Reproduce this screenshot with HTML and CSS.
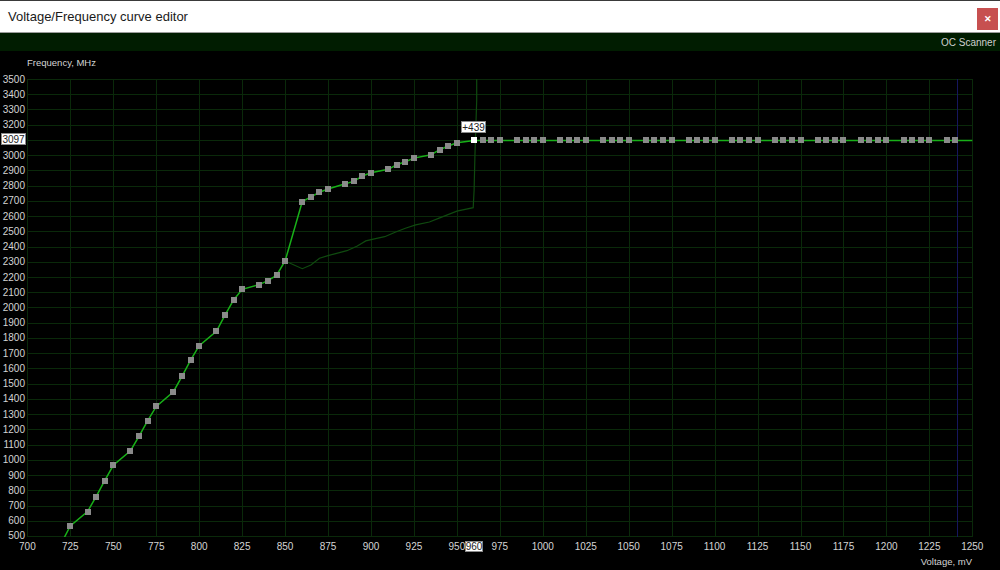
FILE: index.html
```html
<!DOCTYPE html>
<html lang="en">
<head>
  <meta charset="UTF-8">
  <title>Voltage/Frequency curve editor</title>
  <link rel="stylesheet" href="styles.css">
</head>
<body>
  <div class="window">
    <div class="titlebar">
      <span class="title">Voltage/Frequency curve editor</span>
      <span class="close">&#x2715;</span>
    </div>
    <div class="toolbar">
      <span class="scanner">OC Scanner</span>
    </div>
    <div class="chart">
      <svg id="curve" width="1000" height="519" viewBox="0 51 1000 519">
        <defs>
          <clipPath id="plot">
            <rect x="27" y="79" width="946" height="458"></rect>
          </clipPath>
        </defs>
        <g id="grid"></g>
        <g id="labels" class="axis"></g>
        <g id="lines" clip-path="url(#plot)"></g>
        <g id="dots"></g>
        <g id="marks" class="mark"></g>
      </svg>
    </div>
  </div>

  <script>
    const NS = "http://www.w3.org/2000/svg";
    const px = v => 27.4 + (v - 700) * 1.718;
    const py = f => 79 + (3500 - f) * 0.152333;

    // edited curve points: [mV, MHz]
    const curve = [
      [720, 458], [725, 566], [735, 660], [740, 758], [745, 863], [750, 964],
      [760, 1060], [765, 1156], [770, 1257], [775, 1351], [785, 1447],
      [790, 1548], [795, 1655], [800, 1749], [810, 1844], [815, 1950],
      [820, 2049], [825, 2119], [835, 2150], [840, 2176], [845, 2211],
      [850, 2305], [860, 2695], [865, 2727], [870, 2756], [875, 2778],
      [885, 2813], [890, 2828], [895, 2863], [900, 2885], [910, 2907],
      [915, 2937], [920, 2957], [925, 2981], [935, 3003], [940, 3036],
      [945, 3060], [950, 3082], [960, 3097]
    ];
    for (let v = 965; v <= 1240; v += 5) {
      if ((v - 700) % 25 !== 5) curve.push([v, 3097]);
    }

    // stock curve (dark)
    const stock = [
      [850, 2305], [860, 2255], [865, 2279], [870, 2323], [875, 2340],
      [880, 2356], [886, 2373], [892, 2404], [897, 2437], [902, 2450],
      [908, 2465], [914, 2494], [920, 2520], [926, 2542], [934, 2561],
      [940, 2588], [950, 2633], [959.5, 2655], [960, 2770], [960.5, 2990],
      [961.5, 3360], [961.5, 3600]
    ];

    function el(parent, name, attrs, text) {
      const node = document.createElementNS(NS, name);
      for (const k in attrs) node.setAttribute(k, attrs[k]);
      if (text !== undefined) node.textContent = text;
      document.getElementById(parent).appendChild(node);
      return node;
    }

    // grid
    for (let v = 700; v <= 1250; v += 25) {
      const x = Math.round(px(v)) + 0.5;
      el("grid", "line", { x1: x, y1: 79, x2: x, y2: 537, class: "gridline" });
      el("labels", "text", { x: px(v), y: 550, "text-anchor": "middle" }, v === 960 ? "" : v);
    }
    for (let f = 500; f <= 3500; f += 100) {
      const y = Math.round(py(f)) + 0.5;
      el("grid", "line", { x1: 27, y1: y, x2: 973, y2: y, class: "gridline" });
      if (f !== 3100) el("labels", "text", { x: 25, y: py(f) + 3.5, "text-anchor": "end" }, f);
    }
    el("grid", "line", { x1: 957.5, y1: 79, x2: 957.5, y2: 537, class: "limit" });

    el("labels", "text", { x: 27, y: 66, class: "caption" }, "Frequency, MHz");
    el("labels", "text", { x: 972, y: 565, "text-anchor": "end", class: "caption" }, "Voltage, mV");

    // curves
    const pts = list => list.map(p => px(p[0]).toFixed(1) + "," + py(p[1]).toFixed(1)).join(" ");
    el("lines", "polyline", { points: pts(stock), class: "stock" });
    el("lines", "polyline", { points: pts(curve.concat([[1250, 3097]])), class: "edited" });

    curve.forEach(p => {
      if (p[0] < 725) return;
      const x = Math.round(px(p[0])), y = Math.round(py(p[1]));
      el("dots", "rect", { x: x - 3, y: y - 3, width: 6, height: 6, class: p[0] === 960 ? "dot active" : "dot" });
    });

    // selected point readouts
    el("marks", "rect", { x: 461.5, y: 121.5, width: 24, height: 11 });
    el("marks", "text", { x: 473.5, y: 130.5, "text-anchor": "middle" }, "+439");
    el("marks", "rect", { x: 1.5, y: 133.5, width: 24, height: 11 });
    el("marks", "text", { x: 13.5, y: 143, "text-anchor": "middle" }, "3097");
    el("marks", "rect", { x: 465.5, y: 541.5, width: 17, height: 10 });
    el("marks", "text", { x: 474, y: 550, "text-anchor": "middle" }, "960");
  </script>
</body>
</html>
```

FILE: styles.css
```css
body {
  margin: 0;
  background: #000;
  font-family: "Liberation Sans", Arial, sans-serif;
}
.window {
  width: 1000px;
  height: 570px;
  display: flex;
  flex-direction: column;
  overflow: hidden;
}
.titlebar {
  height: 31px;
  flex: none;
  display: flex;
  align-items: center;
  justify-content: space-between;
  background: #fff;
  border-top: 1px solid #3a3a3a;
  border-bottom: 1px solid #9c9c9c;
}
.title {
  margin-left: 8px;
  font-size: 13px;
  color: #1a1a1a;
}
.close {
  width: 21px;
  height: 22px;
  margin-right: 2px;
  margin-top: 4px;
  display: flex;
  align-items: center;
  justify-content: center;
  background: #c75050;
  color: #fff;
  font-size: 9px;
  font-weight: bold;
}
.toolbar {
  height: 18px;
  flex: none;
  display: flex;
  align-items: center;
  justify-content: flex-end;
  background: #011d01;
}
.scanner {
  margin-right: 4px;
  font-size: 10px;
  color: #cfcfcf;
}
.chart {
  flex: 1;
  background: #000;
}
.chart svg {
  display: block;
}
.gridline {
  stroke: #0a290a;
  stroke-width: 1;
}
.limit {
  stroke: #16165e;
  stroke-width: 1;
}
.axis text {
  font-family: "Liberation Sans", Arial, sans-serif;
  font-size: 10px;
  fill: #d4d4d4;
}
.axis .caption {
  font-size: 9.5px;
}
.stock {
  fill: none;
  stroke: #0f4a0f;
  stroke-width: 1.2;
}
.edited {
  fill: none;
  stroke: #18b018;
  stroke-width: 1.5;
}
.dot {
  fill: #8a8a8a;
}
.dot.active {
  fill: #fff;
}
.mark rect {
  fill: #fff;
  stroke: #8a8a8a;
  stroke-width: 1;
}
.mark text {
  font-family: "Liberation Sans", Arial, sans-serif;
  font-size: 10px;
  fill: #222;
}
```
